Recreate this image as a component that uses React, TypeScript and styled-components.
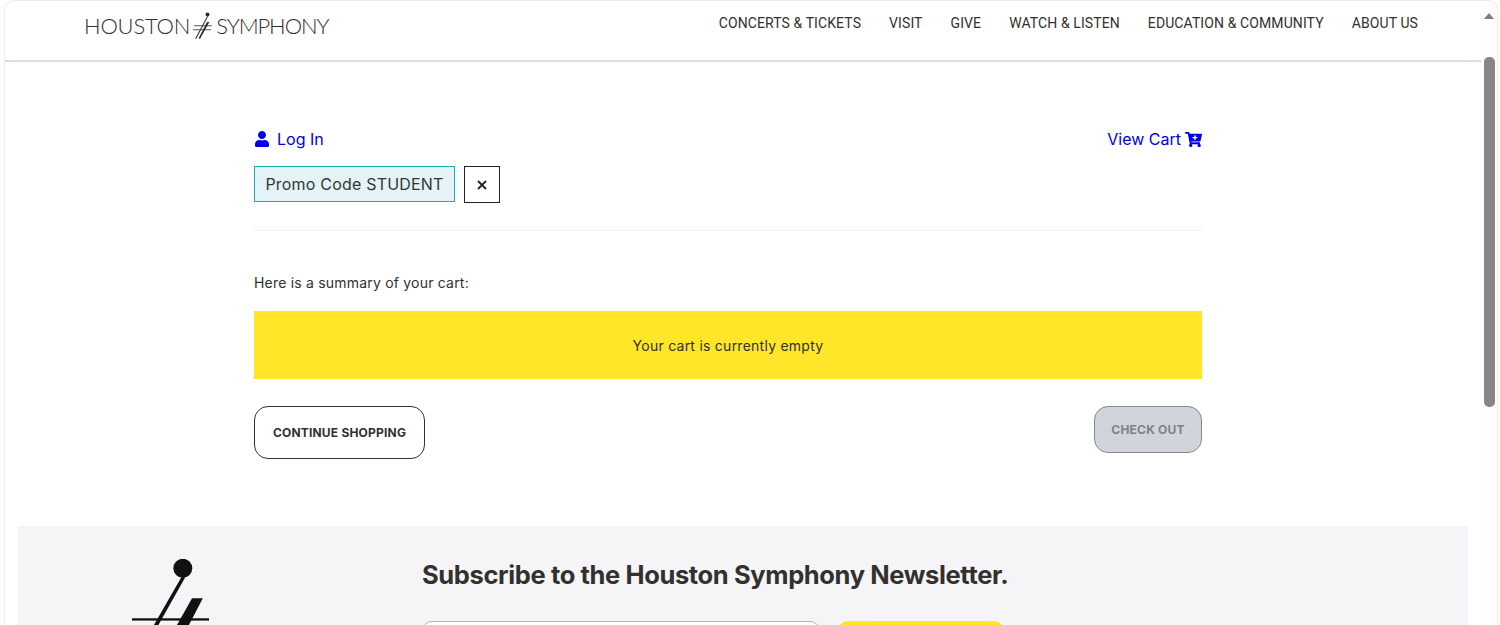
import React from 'react';
import styled, { createGlobalStyle } from 'styled-components';
import { FaUser, FaCartPlus } from 'react-icons/fa';

const GlobalStyle = createGlobalStyle`
  html, body {
    margin: 0;
    padding: 0;
    height: 625px;
    overflow: hidden;
    background: #fff;
    font-family: "Inter", "Liberation Sans", sans-serif;
    color: #33302e;
  }
`;

const Frame = styled.div`
  display: flex;
  box-sizing: border-box;
  height: 625px;
  margin: 0 2px 0 4px;
  border: 1px solid #ececec;
  border-bottom: none;
  border-radius: 10px 10px 0 0;
  overflow: hidden;
`;

const Page = styled.div`
  flex: 1;
  min-width: 0;
  display: flex;
  flex-direction: column;
`;

const Header = styled.header`
  box-sizing: border-box;
  height: 61px;
  flex: none;
  display: flex;
  justify-content: space-between;
  align-items: flex-start;
  padding: 0 63px 0 79px;
  border-bottom: 2px solid #d9dfdf;
`;

const Logo = styled.a`
  display: flex;
  align-items: center;
  gap: 3px;
  height: 49px;
  font-family: "Lato", sans-serif;
  font-weight: 300;
  font-size: 22px;
  color: #2f2f2f;
`;

const LogoWord = styled.span`
  letter-spacing: ${(p) => p.$spacing}px;
`;

const Nav = styled.nav`
  display: flex;
  gap: 28px;
  padding-top: 14px;
`;

const NavLink = styled.a`
  font-family: "Roboto", sans-serif;
  font-size: 14px;
  line-height: 17px;
  letter-spacing: 0.1px;
  color: #33302e;
`;

const Main = styled.main`
  flex: none;
  box-sizing: border-box;
  width: 948px;
  margin-left: 249px;
  padding-top: 67px;
`;

const AccountRow = styled.div`
  display: flex;
  justify-content: space-between;
  align-items: center;
  height: 20px;
`;

const AccountLink = styled.a`
  display: flex;
  align-items: center;
  gap: ${(p) => p.$gap}px;
  font-size: 16px;
  color: #0000e6;

  svg {
    display: block;
  }
`;

const PromoRow = styled.div`
  display: flex;
  gap: 9px;
  margin-top: 17px;
  padding-bottom: 27px;
  border-bottom: 1px solid #f0f0f0;
`;

const PromoTag = styled.div`
  box-sizing: border-box;
  width: 201px;
  height: 36px;
  display: flex;
  align-items: center;
  justify-content: center;
  background: #e3f3f6;
  border: 1px solid #17b3b3;
  font-size: 16px;
  letter-spacing: 0.2px;
  white-space: nowrap;
  color: #33373a;
`;

const RemoveButton = styled.button`
  box-sizing: border-box;
  width: 36px;
  height: 37px;
  display: flex;
  align-items: center;
  justify-content: center;
  padding: 0;
  background: #fff;
  border: 1px solid #222;
  svg {
    display: block;
  }
`;

const Summary = styled.p`
  margin: 43px 0 0;
  font-size: 14px;
  line-height: 18px;
  letter-spacing: 0.2px;
  color: #33302e;
`;

const EmptyNotice = styled.div`
  height: 68px;
  margin-top: 19px;
  display: flex;
  align-items: center;
  justify-content: center;
  background: #ffe629;
  font-size: 14px;
  letter-spacing: 0.25px;
  color: #33302e;
`;

const Actions = styled.div`
  display: flex;
  justify-content: space-between;
  align-items: flex-start;
  margin-top: 27px;
`;

const ActionButton = styled.button`
  box-sizing: border-box;
  width: ${(p) => p.$width}px;
  height: ${(p) => p.$height}px;
  padding: 0;
  border-radius: 14px;
  border: 1px solid ${(p) => (p.$disabled ? '#85888c' : '#33302e')};
  background: ${(p) => (p.$disabled ? '#d1d5db' : '#fff')};
  color: ${(p) => (p.$disabled ? '#808285' : '#33302e')};
  font-family: "Inter", sans-serif;
  font-size: 12px;
  font-weight: 700;
  letter-spacing: 0.2px;
`;

const Newsletter = styled.section`
  box-sizing: border-box;
  flex: none;
  height: 200px;
  margin: 67px 13px 0 13px;
  display: flex;
  background: #f5f5f8;
`;

const Mark = styled.div`
  flex: none;
  width: 404px;
  padding: 33px 0 0 114px;
  box-sizing: border-box;

  svg {
    display: block;
  }
`;

const SubscribeBody = styled.div`
  padding-top: 33px;
`;

const SubscribeTitle = styled.h2`
  margin: 0;
  font-size: 25.5px;
  line-height: 32px;
  font-weight: 700;
  letter-spacing: -0.38px;
  color: #33302e;
  white-space: nowrap;
`;

const SubscribeForm = styled.div`
  display: flex;
  gap: 18px;
  margin-top: 30px;
`;

const EmailInput = styled.input`
  box-sizing: border-box;
  width: 398px;
  height: 48px;
  background: #fff;
  border: 1px solid #b5b5b5;
  border-radius: 10px;
`;

const SubscribeButton = styled.button`
  width: 166px;
  height: 48px;
  border: none;
  border-radius: 10px;
  background: #ffe629;
`;

const Scrollbar = styled.div`
  flex: none;
  width: 15px;
  margin-right: 1px;
  position: relative;
  background: #fdfdfd;
`;

const ScrollArrow = styled.div`
  position: absolute;
  top: 12px;
  left: 3px;
  width: 0;
  height: 0;
  border-left: 5px solid transparent;
  border-right: 5px solid transparent;
  border-bottom: 6px solid #7f7f7f;
`;

const ScrollThumb = styled.div`
  position: absolute;
  top: 56px;
  left: 3px;
  width: 11px;
  height: 350px;
  border-radius: 5px;
  background: #868686;
`;

const SymphonyMark = ({ size }: { size: number }) => (
  <svg width={size} height={size * 1.2} viewBox="0 0 100 120" fill="#111" aria-hidden="true">
    <circle cx="66" cy="12" r="12.3" />
    <path d="M65 22 L69 24 L15 120 L10 118 Z" />
    <path d="M78 51 L92 51 L56 120 L39 120 Z" />
    <rect x="0" y="77" width="100" height="3" />
  </svg>
);

const SmallMark = () => (
  <svg width="20" height="28" viewBox="0 0 20 28" fill="#2f2f2f" aria-hidden="true">
    <circle cx="14.5" cy="2.5" r="2" />
    <path d="M14.2 4 L15 4.5 L3.2 27 L2.2 26.5 Z" />
    <path d="M14 10 L16.4 10 L7 27 L5.6 26.2 Z" />
    <rect x="1" y="13.4" width="18" height="0.8" />
    <rect x="0" y="17.4" width="18" height="0.8" />
  </svg>
);

const NAV_ITEMS = ['CONCERTS & TICKETS', 'VISIT', 'GIVE', 'WATCH & LISTEN', 'EDUCATION & COMMUNITY', 'ABOUT US'];

export default function App() {
  return (
    <>
      <GlobalStyle />
      <Frame>
        <Page>
          <Header>
            <Logo>
              <LogoWord $spacing={-0.2}>HOUSTON</LogoWord>
              <SmallMark />
              <LogoWord $spacing={-1.1}>SYMPHONY</LogoWord>
            </Logo>
            <Nav>
              {NAV_ITEMS.map((item) => (
                <NavLink key={item}>{item}</NavLink>
              ))}
            </Nav>
          </Header>
          <Main>
            <AccountRow>
              <AccountLink $gap={7}>
                <FaUser size={16} />
                Log In
              </AccountLink>
              <AccountLink $gap={4}>
                View Cart
                <FaCartPlus size={17} />
              </AccountLink>
            </AccountRow>
            <PromoRow>
              <PromoTag>Promo Code STUDENT</PromoTag>
              <RemoveButton aria-label="Remove promo code">
                <svg width="10" height="10" viewBox="0 0 10 10" stroke="#222" strokeWidth="1.8" fill="none">
                  <path d="M1 1 L9 9 M9 1 L1 9" />
                </svg>
              </RemoveButton>
            </PromoRow>
            <Summary>Here is a summary of your cart:</Summary>
            <EmptyNotice>Your cart is currently empty</EmptyNotice>
            <Actions>
              <ActionButton $width={171} $height={53}>CONTINUE SHOPPING</ActionButton>
              <ActionButton $width={108} $height={47} $disabled>CHECK OUT</ActionButton>
            </Actions>
          </Main>
          <Newsletter>
            <Mark>
              <SymphonyMark size={77} />
            </Mark>
            <SubscribeBody>
              <SubscribeTitle>Subscribe to the Houston Symphony Newsletter.</SubscribeTitle>
              <SubscribeForm>
                <EmailInput aria-label="Email" />
                <SubscribeButton aria-label="Subscribe" />
              </SubscribeForm>
            </SubscribeBody>
          </Newsletter>
        </Page>
        <Scrollbar>
          <ScrollArrow />
          <ScrollThumb />
        </Scrollbar>
      </Frame>
    </>
  );
}
